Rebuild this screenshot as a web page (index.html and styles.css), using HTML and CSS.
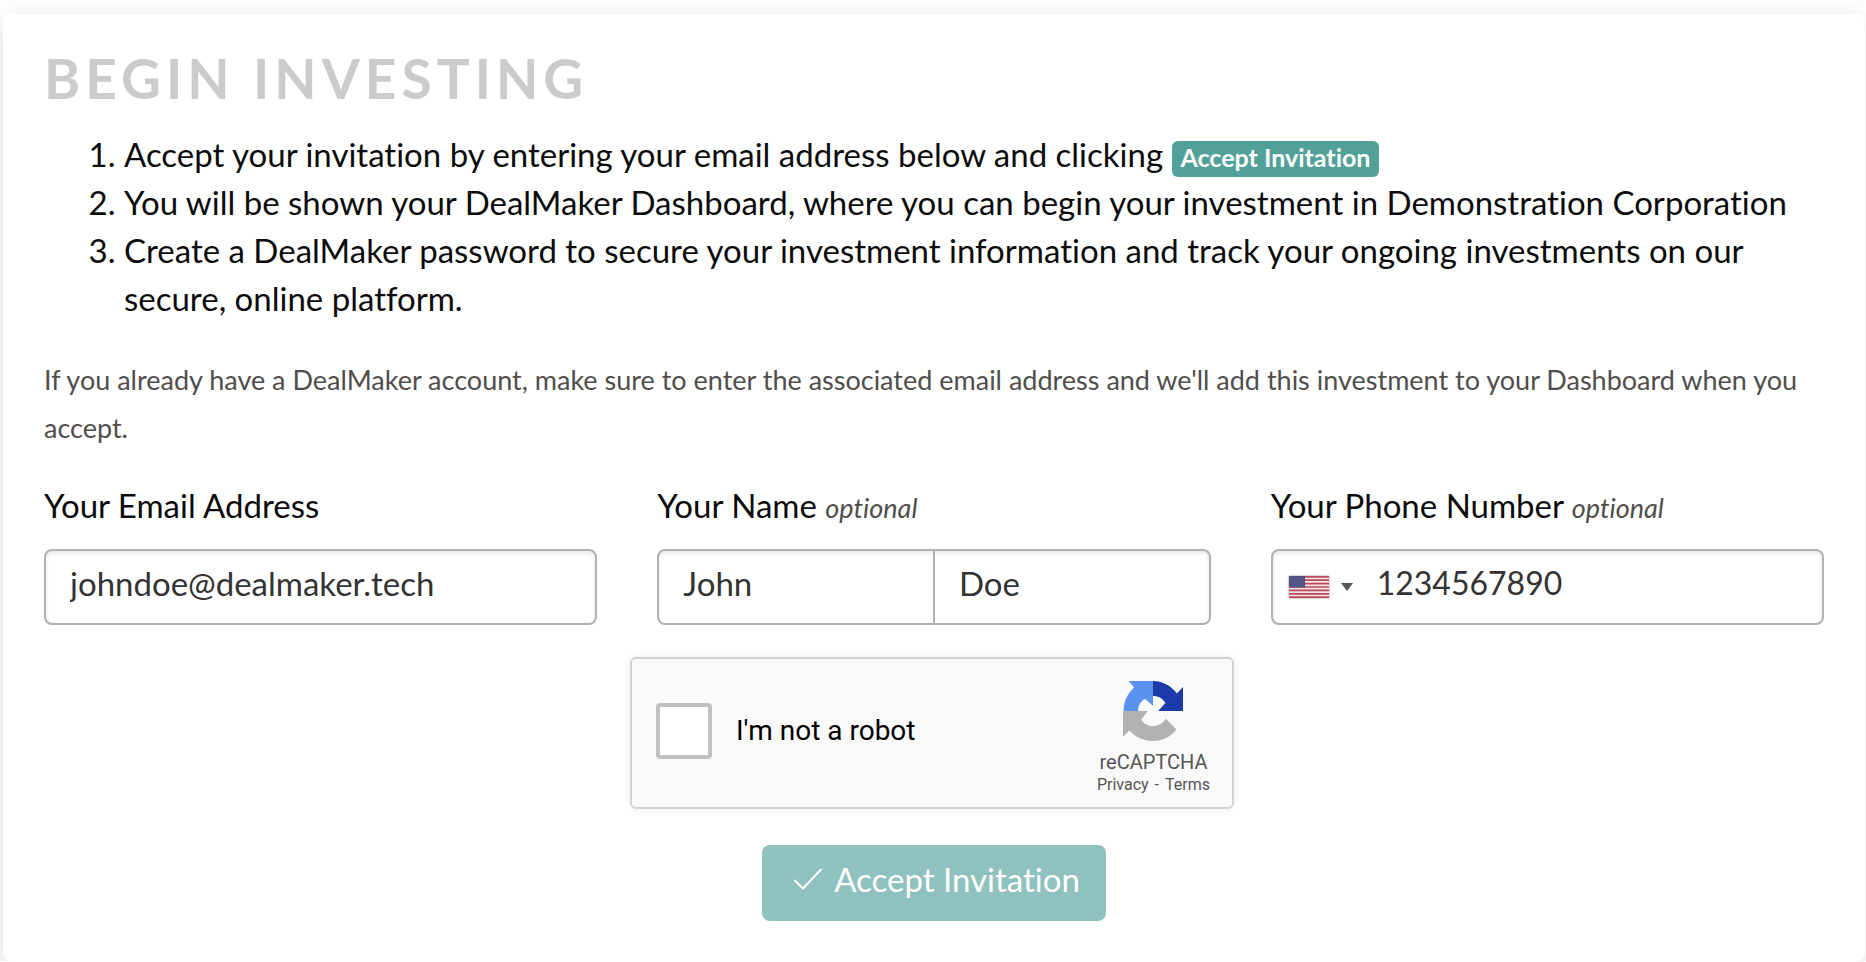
FILE: index.html
```html
<!DOCTYPE html>
<html lang="en">
<head>
<meta charset="utf-8">
<meta name="viewport" content="width=device-width, initial-scale=1">
<title>Begin Investing</title>
<link rel="stylesheet" href="styles.css">
</head>
<body>
<main class="card">
  <h1 class="title">Begin Investing</h1>
  <ol class="steps">
    <li>Accept your invitation by entering your email address below and clicking <span class="tag">Accept Invitation</span></li>
    <li>You will be shown your DealMaker Dashboard, where you can begin your investment in Demonstration Corporation</li>
    <li>Create a DealMaker password to secure your investment information and track your ongoing investments on our secure, online platform.</li>
  </ol>
  <p class="note">If you already have a DealMaker account, make sure to enter the associated email address and we'll add this investment to your Dashboard when you accept.</p>
  <form class="form">
    <div class="fields">
      <div class="field">
        <label class="label" for="email">Your Email Address</label>
        <div class="box"><input class="input" id="email" type="email" value="johndoe@dealmaker.tech"></div>
      </div>
      <div class="field">
        <label class="label" for="first">Your Name <em class="optional">optional</em></label>
        <div class="box">
          <input class="input" id="first" type="text" value="John">
          <input class="input input-last" type="text" value="Doe" aria-label="Last name">
        </div>
      </div>
      <div class="field">
        <label class="label" for="phone">Your Phone Number <em class="optional">optional</em></label>
        <div class="box">
          <button class="country" type="button" aria-label="Country: United States">
            <svg class="flag" viewBox="0 0 40 22" preserveAspectRatio="none" aria-hidden="true">
              <path fill="#f1e3e6" d="M0 0h40v22H0z"/>
              <path stroke="#bd4a5c" stroke-width="1.7" d="M0 .85h40M0 4.2h40M0 7.6h40M0 11h40M0 14.4h40M0 17.8h40M0 21.15h40"/>
              <path fill="#4d4f80" d="M0 0h16v11.500H0z"/>
              <path stroke="#7b7ca3" stroke-width=".8" stroke-dasharray="1 1.200" d="M1 2h14M2 4h13M1 6h14M2 8h13M1 10h14"/>
            </svg>
            <svg class="caret" viewBox="0 0 12 8" aria-hidden="true"><path fill="#555" d="M0 0h12L6 8z"/></svg>
          </button>
          <input class="input input-phone" id="phone" type="tel" value="1234567890">
        </div>
      </div>
    </div>
    <div class="captcha">
      <input class="check" id="robot" type="checkbox">
      <label class="robot" for="robot">I'm not a robot</label>
      <div class="brand">
        <svg class="logo" viewBox="0 0 64 64" aria-hidden="true">
          <path fill="#1c3aa9" d="M64 31.955V6.500l-6.500 6.700C51 5 42 .027 31.990.027V16c6 0 10.500 2.500 13.300 7.500L37.500 31.955z"/>
          <path fill="#5a92f0" d="M31.990.030H5.922l6 7C5 13 .700 22 .700 31.955H16c.2-6 3-10.500 7.500-13l8.490 7.600z"/>
          <path fill="#b2b2b2" d="M.030 31.955V59.400l6.800-6.500C13.070 60 22 64 32 64c10.500 0 19-4.600 25-12.600L45.800 40.200C42 45.500 38 48 32 48c-5.500 0-9.500-2.500-12.500-7l7-9.045z"/>
        </svg>
        <span class="brand-name">reCAPTCHA</span>
        <span class="legal"><a href="#privacy">Privacy</a><span>-</span><a href="#terms">Terms</a></span>
      </div>
    </div>
    <button class="submit" type="submit">
      <svg class="tick" viewBox="0 0 28 22" aria-hidden="true"><path fill="none" stroke="#fff" stroke-width="2" stroke-linecap="round" stroke-linejoin="round" d="M1 12.500l8 8L27 1.500"/></svg>
      Accept Invitation
    </button>
  </form>
</main>
</body>
</html>
```
FILE: styles.css
```css
* {
  box-sizing: border-box;
}

body {
  margin: 0;
  padding: 14px 1px 0 3px;
  background: #fff;
  color: #0b0b0b;
  font-family: Lato, "Open Sans", sans-serif;
  font-size: 33px;
  line-height: 48px;
  font-variant-ligatures: none;
}

.card {
  padding: 40px 41px;
  background: #fff;
  border-radius: 8px;
  box-shadow: 0 8px 32px rgba(0, 0, 0, 0.15);
}

.title {
  margin: 0;
  color: #cccbca;
  font-size: 55px;
  line-height: 48px;
  font-weight: 700;
  letter-spacing: 5px;
  text-transform: uppercase;
}

.steps {
  margin: 28px 0 34px;
  padding-left: 80px;
}

.tag {
  display: inline-block;
  padding: 0 9px 4px;
  border-radius: 6px;
  background: #51a199;
  color: #fff;
  font-size: 25px;
  line-height: 32px;
  font-weight: 700;
}

.note {
  margin: 0 0 29px;
  color: #504e4c;
  font-size: 27px;
}

.form {
  display: flex;
  flex-direction: column;
  align-items: center;
}

.fields {
  align-self: stretch;
  display: grid;
  grid-template-columns: repeat(3, minmax(0, 1fr));
  gap: 60px;
}

.label {
  display: block;
  margin-bottom: 20px;
}

.optional {
  color: #504e4c;
  font-size: 27px;
  line-height: 1;
}

.box {
  display: flex;
  height: 76px;
  overflow: hidden;
  border: 2px solid #b5b0ad;
  border-radius: 8px;
  box-shadow: inset 0 2px 4px rgba(0, 0, 0, 0.1);
}

.input {
  flex: 1;
  min-width: 0;
  padding: 0 24px 8px;
  border: 0;
  background: none;
  color: #333;
  font: inherit;
}

.input-last {
  border-left: 2px solid #b5b0ad;
}

.input-phone {
  padding-left: 24px;
  font-size: 32px;
}

.country {
  display: flex;
  align-items: center;
  gap: 12px;
  padding: 0 0 0 16px;
  border: 0;
  background: none;
}

.flag {
  width: 40px;
  height: 22px;
  box-shadow: 0 0 2px #888;
}

.caret {
  width: 12px;
  height: 8px;
}

.captcha {
  display: flex;
  align-items: center;
  width: 604px;
  max-width: 100%;
  height: 152px;
  margin: 32px 4px 36px 0;
  padding: 0 22px 4px 24px;
  border: 2px solid #d3d3d3;
  border-radius: 6px;
  background: #f9f9f9;
  box-shadow: 0 0 8px rgba(0, 0, 0, 0.08);
  font-family: Roboto, sans-serif;
}

.check {
  appearance: none;
  width: 56px;
  height: 56px;
  margin: 0 24px 0 0;
  border: 4px solid #c1c1c1;
  border-radius: 4px;
  background: #fff;
}

.robot {
  flex: 1;
  color: #000;
  font-size: 28px;
}

.brand {
  display: flex;
  flex-direction: column;
  align-items: center;
  padding-top: 14px;
  color: #555;
}

.logo {
  width: 60px;
  height: 60px;
  margin-bottom: 8px;
}

.brand-name {
  font-size: 20px;
  line-height: 26px;
}

.legal {
  display: flex;
  gap: 6px;
  font-size: 16px;
  line-height: 20px;
}

.legal a {
  color: inherit;
  text-decoration: none;
}

.submit {
  display: flex;
  align-items: center;
  gap: 12px;
  height: 76px;
  padding: 0 26px 8px 32px;
  border: 0;
  border-radius: 8px;
  background: #8fc1be;
  color: #fff;
  font: inherit;
}

.tick {
  width: 28px;
  height: 22px;
}
```
